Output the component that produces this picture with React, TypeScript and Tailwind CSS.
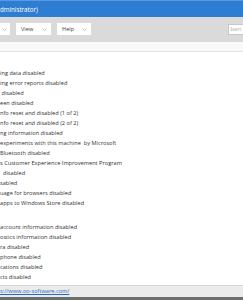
import React from 'react';

const groupOne = [
  'ing data disabled',
  'ing error reports disabled',
  ' disabled',
  'een disabled',
  'nfo reset and disabled (1 of 2)',
  'nfo reset and disabled (2 of 2)',
  'ng information disabled',
  'experiments with this machine  by Microsoft',
  'Bluetooth disabled',
  's Customer Experience Improvement Program',
  '  disabled',
  'sabled',
  'uage for browsers disabled',
  'apps to Windows Store disabled',
];

const groupTwo = [
  'account information disabled',
  'ostics information disabled',
  'ra disabled',
  'phone disabled',
  'cations disabled',
  'cts disabled',
];

function Chevron() {
  return (
    <svg width="5" height="3" viewBox="0 0 5 3" className="shrink-0">
      <path d="M0.5 0.5 L2.5 2.5 L4.5 0.5" fill="none" stroke="#b5b5b5" strokeWidth="0.8" />
    </svg>
  );
}

function Row({ text }: { text: string }) {
  return (
    <div className="h-[10px] flex items-center whitespace-pre text-[5.65px] text-[#333]">
      {text}
    </div>
  );
}

export default function App() {
  return (
    <div
      className="w-[243px] h-[300px] overflow-hidden flex flex-col bg-white"
      style={{ fontFamily: '"Segoe UI", "Open Sans", "Noto Sans", sans-serif' }}
    >
      <div className="h-[17px] shrink-0 bg-[#2d7dd2] border-t border-[#5b9ae0] flex items-center pt-[1px] text-white text-[6.2px] whitespace-pre">
        dministrator)
      </div>

      <div className="h-[25px] shrink-0 bg-[#dadada] flex items-start pt-[6px]">
        <div className="w-[10px] h-[12px] bg-white flex items-center pl-[2px]">
          <Chevron />
        </div>
        <div className="w-[35px] h-[12px] bg-white ml-[6px] flex items-center pl-[5px] pr-[4px] justify-between text-[5.65px] text-[#444]">
          <span>View</span>
          <Chevron />
        </div>
        <div className="w-[34px] h-[12px] bg-white ml-[6px] flex items-center pl-[5px] pr-[4px] justify-between text-[5.65px] text-[#444]">
          <span>Help</span>
          <Chevron />
        </div>
        <div className="ml-auto w-[15px] h-[11px] mt-[1px] bg-white border-l border-t border-b border-[#c8c8c8] flex items-center pl-[1px] text-[4.6px] text-[#aaa] whitespace-nowrap">
          Searc
        </div>
      </div>

      <div className="h-[10px] shrink-0 bg-[#f9f9f9] border-b border-[#e4e4e4]" />

      <div className="flex-1 flex flex-col">
        <div className="h-[16px]" />
        {groupOne.map((t, i) => (
          <Row key={i} text={t} />
        ))}
        <div className="h-[14px]" />
        {groupTwo.map((t, i) => (
          <Row key={i} text={t} />
        ))}
      </div>

      <div className="h-[12px] shrink-0 bg-[#ebebeb] border-t border-[#d6d6d6] flex items-center text-[5.65px]">
        <span className="text-[#1f6fc8] underline">s://www.oo-software.com/</span>
      </div>
      <div className="h-[3px] shrink-0 bg-[#6e6e6e]" />
    </div>
  );
}
